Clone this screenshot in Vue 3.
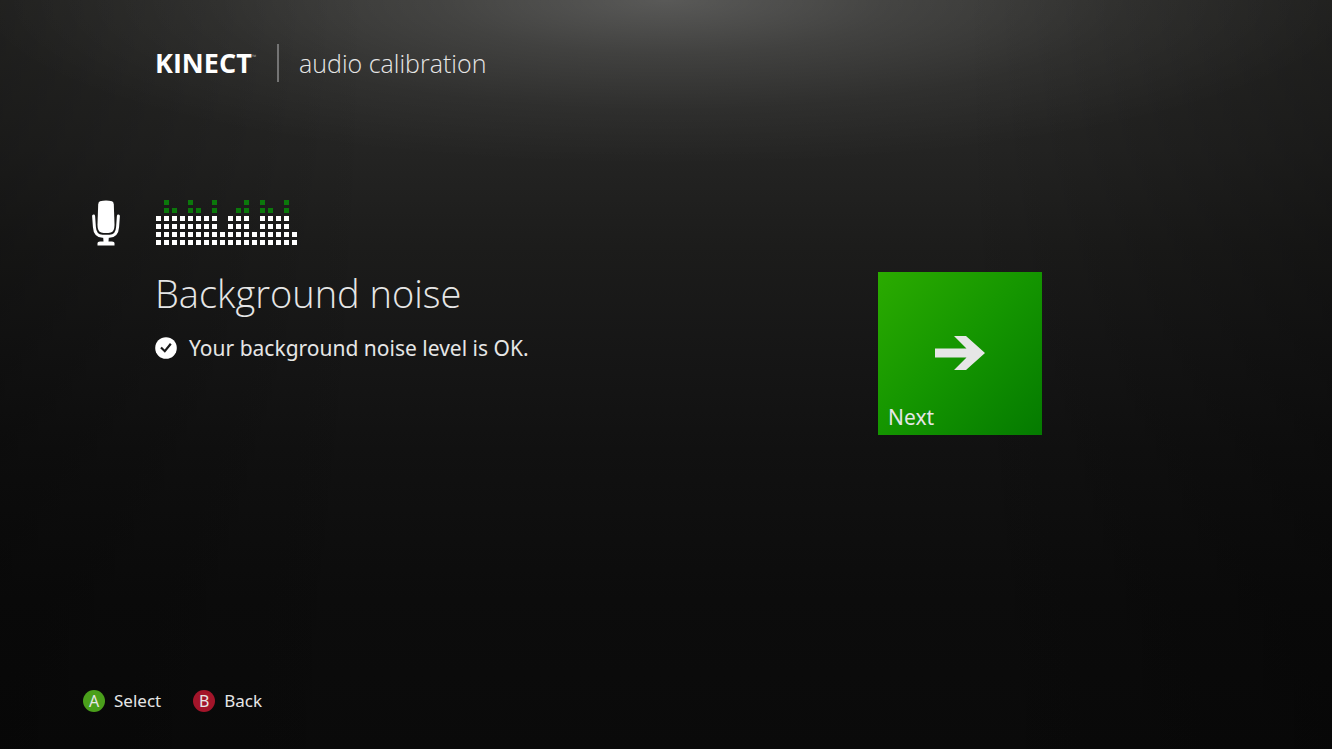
<template>
  <div class="screen">
    <header class="header">
      <span class="brand">KINECT<span class="trademark">™</span></span>
      <span class="divider"></span>
      <h1 class="section">audio calibration</h1>
    </header>

    <main class="main">
      <svg class="mic" viewBox="0 0 28 46" aria-hidden="true">
        <path class="mic-body" d="M8 1.2 Q14 -0.4 20 1.2 Q21.600 1.800 21.800 4.500 L22.500 24 Q22.700 31.500 18.800 32.600 Q14 33.600 9.200 32.600 Q5.300 31.500 5.500 24 L6.200 4.500 Q6.400 1.800 8 1.200 Z" />
        <path class="mic-stand" d="M1.600 16 L2.400 27 Q3 36.200 10.500 36.200 L17.500 36.200 Q25 36.200 25.600 27 L26.400 16" />
        <path class="mic-neck" d="M11 35 H17 L16.500 41.500 H20 Q22.500 41.500 22.500 43 V45.500 H5.500 V43 Q5.500 41.500 8 41.500 H11.500 Z" />
      </svg>

      <section class="result">
        <div class="meter" aria-hidden="true">
          <div v-for="(level, i) in levels" :key="i" class="meter-column">
            <span v-for="n in level" :key="n" class="cell" :class="{ loud: n > 4 }"></span>
          </div>
        </div>
        <h2 class="title">Background noise</h2>
        <p class="status">
          <svg class="check" viewBox="0 0 22 22" aria-hidden="true">
            <circle cx="11" cy="11" r="10.8" fill="#fff" />
            <path d="M6 10.500 L9.800 14.200 L15.800 6.800" fill="none" stroke="#1a1a1a" stroke-width="2.200" />
          </svg>
          Your background noise level is OK.
        </p>
      </section>

      <button type="button" class="tile">
        <svg class="arrow" viewBox="0 0 50 36" aria-hidden="true">
          <path d="M0 13.500 H31.500 L19 1 H31 L50 18 L31 35 H19 L31.500 22.500 H0 Z" />
        </svg>
        <span class="tile-label">Next</span>
      </button>
    </main>

    <footer class="hints">
      <button v-for="hint in hints" :key="hint.key" type="button" class="hint">
        <span class="pad" :class="hint.color">{{ hint.key }}</span>
        {{ hint.label }}
      </button>
    </footer>
  </div>
</template>

<script setup>
// lit cells per column, everything above 4 is shown in green
const levels = [4, 6, 5, 4, 6, 5, 4, 6, 2, 4, 5, 6, 2, 6, 5, 4, 6, 2];

const hints = [
  { key: 'A', label: 'Select', color: 'green' },
  { key: 'B', label: 'Back', color: 'red' }
];
</script>

<style>
body {
  margin: 0;
  background: #090909;
}
</style>

<style scoped>
.screen {
  display: flex;
  flex-direction: column;
  min-height: 100vh;
  box-sizing: border-box;
  padding: 40px 0 36px;
  color: #e6e6e6;
  font-family: 'Noto Sans', 'Open Sans', sans-serif;
  /* spotlight from the top edge, darker sides, base fade */
  background:
    radial-gradient(ellipse 52% 22% at 50% 0, rgba(255, 255, 255, 0.21), rgba(255, 255, 255, 0.11) 33%, rgba(255, 255, 255, 0.04) 66%, transparent),
    linear-gradient(to right, rgba(0, 0, 0, 0.28), transparent 28%, transparent 72%, rgba(0, 0, 0, 0.28)),
    linear-gradient(#2d2d2b, #242423 20%, #1c1c1b 33%, #161616 47%, #111 60%, #0c0c0c 80%, #0a0a0a);
}

.header {
  display: flex;
  align-items: center;
  height: 46px;
  padding-left: 155px;
}

.brand {
  display: flex;
  width: 122px;
  font-family: 'Open Sans', sans-serif;
  font-size: 27px;
  font-weight: 700;
  line-height: 36px;
  color: #fff;
}

.trademark {
  font-size: 6px;
  font-weight: 400;
  line-height: 24px;
  color: #999;
}

.divider {
  width: 2px;
  height: 38px;
  background: #747474;
}

.section {
  margin: 0 0 0 20px;
  font-family: 'Open Sans', sans-serif;
  font-size: 25px;
  font-weight: 300;
  line-height: 36px;
}

.main {
  display: grid;
  grid-template-columns: 63px minmax(0, 723fr) 164px minmax(0, 290fr);
  align-items: start;
  padding: 114px 0 0 92px;
}

.mic {
  width: 28px;
  height: 46px;
}

.mic-body,
.mic-neck {
  fill: #fff;
}

.mic-stand {
  fill: none;
  stroke: #fff;
  stroke-width: 3;
  stroke-linecap: round;
}

.meter {
  display: flex;
  gap: 3px;
  height: 45px;
  padding-left: 1px;
}

.meter-column {
  display: flex;
  flex-direction: column-reverse;
  gap: 3px;
}

.cell {
  width: 5px;
  height: 5px;
  background: #fff;
}

.cell.loud {
  background: #0b780b;
}

.title {
  margin: 20px 0 0;
  font-family: 'Open Sans', sans-serif;
  font-size: 38px;
  font-weight: 300;
  line-height: 56px;
}

.status {
  display: flex;
  align-items: center;
  gap: 12px;
  margin: 11px 0 0;
  font-size: 21px;
  line-height: 32px;
}

.check {
  width: 22px;
  height: 22px;
}

.tile {
  display: flex;
  flex-direction: column;
  height: 163px;
  margin-top: 72px;
  padding: 0 10px 2px;
  border: 0;
  font-family: inherit;
  text-align: left;
  color: #e6e6e6;
  background: linear-gradient(135deg, #2bab00, #149500 50%, #047a00);
}

.arrow {
  width: 50px;
  height: 36px;
  margin: 63px auto auto;
  fill: #e6e6e6;
}

.tile-label {
  font-size: 21px;
  line-height: 32px;
}

.hints {
  display: flex;
  gap: 32px;
  margin-top: auto;
  padding-left: 83px;
}

.hint {
  display: flex;
  align-items: center;
  gap: 9px;
  padding: 0;
  border: 0;
  font-family: inherit;
  font-size: 17px;
  line-height: 24px;
  color: #e6e6e6;
  background: none;
}

.pad {
  width: 22px;
  height: 22px;
  border-radius: 50%;
  font-size: 16px;
  line-height: 22px;
  text-align: center;
}

.pad.green {
  background: #4a9f1b;
}

.pad.red {
  background: #a3152a;
}
</style>
